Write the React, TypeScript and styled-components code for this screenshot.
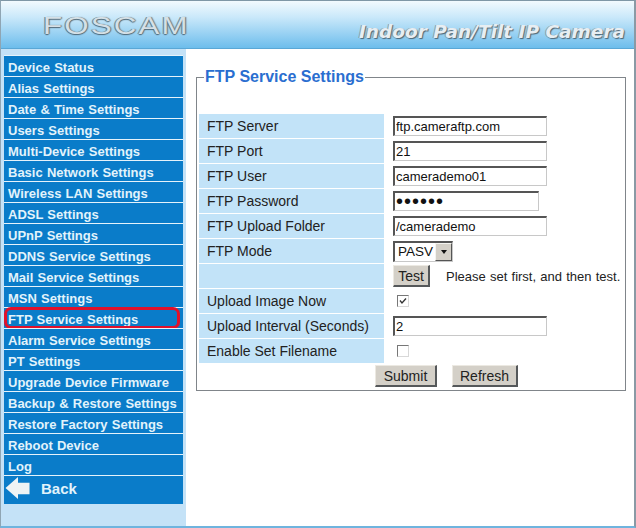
import React from 'react';
import styled, { createGlobalStyle } from 'styled-components';

const GlobalStyle = createGlobalStyle`
	html, body {
		margin: 0;
		padding: 0;
		background: #fff;
	}
	body {
		font-family: 'Liberation Sans', Arial, sans-serif;
	}
`;

const Page = styled.div`
	width: 636px;
	height: 528px;
	box-sizing: border-box;
	display: flex;
	flex-direction: column;
	overflow: hidden;
	border-top: 1px solid #7f97a6;
	border-left: 1px solid #8fa5b3;
	border-right: 2px solid #8a9aa5;
	border-bottom: 2px solid #6fb4de;
	background: #fff;
`;

const Header = styled.header`
	height: 47px;
	flex: none;
	display: flex;
	justify-content: space-between;
	background: linear-gradient(#f2fafe 0%, #c9e8fa 35%, #6dbdec 100%);
	border-bottom: 1px solid #5aa7d6;
`;

const Logo = styled.div`
	margin: 11px 0 0 42px;
	font-size: 24px;
	line-height: 28px;
	letter-spacing: 1.7px;
	color: #d5e0e6;
	text-shadow: 0 1px 1px #4f6675, 1px 0 1px #6d808d, -1px 0 0 #7c92a1;
	transform: scaleX(1.3);
	transform-origin: left center;
`;

const Slogan = styled.div`
	margin: 20px 9px 0 0;
	font-family: 'DejaVu Sans', sans-serif;
	font-size: 18.5px;
	line-height: 22px;
	font-weight: bold;
	font-style: italic;
	color: #e7eef2;
	white-space: nowrap;
	text-shadow: 1px 1px 1px #4d6575, -1px 0 0 #8aa0ae;
`;

const Body = styled.div`
	flex: 1;
	display: flex;
	min-height: 0;
`;

const Sidebar = styled.aside`
	width: 185px;
	flex: none;
	box-sizing: border-box;
	padding: 6px 3px 0 3px;
	background: #c4e2f7;
`;

const Menu = styled.ul`
	list-style: none;
	margin: 0;
	padding: 0;
	background: #0a7cc9;
`;

const MenuItem = styled.li<{ $active?: boolean }>`
	position: relative;
	height: 21px;
	box-sizing: border-box;
	padding: 3px 0 0 4px;
	border-top: 1px solid #e6f3fb;
	font-size: 13px;
	line-height: 17px;
	font-weight: bold;
	color: #e2f3fb;
	word-spacing: 0.6px;
	white-space: nowrap;

	${({ $active }) =>
		$active &&
		`&::after {
			content: '';
			position: absolute;
			left: 0;
			right: 3px;
			top: -1px;
			height: 22px;
			border: 3px solid #e0112b;
			border-radius: 7px;
			box-sizing: border-box;
		}`}
`;

const BackItem = styled.li`
	height: 29px;
	box-sizing: border-box;
	padding-bottom: 4px;
	border-top: 1px solid #e6f3fb;
	display: flex;
	align-items: center;
	gap: 10px;
	font-size: 15px;
	font-weight: bold;
	color: #e2f3fb;
	background: #0a7cc9;
`;

const Arrow = styled.svg`
	width: 26px;
	height: 24px;
	margin-left: 1px;
	flex: none;
`;

const Main = styled.main`
	flex: 1;
	padding: 19px 8px 0 10px;
	background: #fff;
`;

const Fieldset = styled.fieldset`
	margin: 0;
	padding: 28px 2px 0 2px;
	height: 323px;
	box-sizing: border-box;
	border: 1px solid #80858a;
	border-radius: 0;
`;

const Legend = styled.legend`
	margin-left: 5px;
	padding: 0 1px;
	font-size: 16px;
	line-height: 18px;
	font-weight: bold;
	color: #2a6ed0;
`;

const Rows = styled.div`
	display: flex;
	flex-direction: column;
`;

const Row = styled.div`
	height: 25px;
	display: flex;
`;

const Label = styled.div`
	width: 185px;
	flex: none;
	box-sizing: border-box;
	height: 24px;
	padding: 0 8px;
	background: #c2e3f8;
	font-size: 14px;
	line-height: 24px;
	color: #222;
	white-space: nowrap;
`;

const Cell = styled.div`
	flex: 1;
	display: flex;
	align-items: center;
	height: 24px;
	padding-left: 9px;
`;

const TextInput = styled.input<{ $width?: number }>`
	width: ${({ $width }) => $width ?? 154}px;
	height: 20px;
	box-sizing: border-box;
	margin: 0;
	padding: 0 1px;
	border-style: solid;
	border-width: 2px 1px 1px 2px;
	border-color: #555 #c8c8c8 #c8c8c8 #555;
	background: #fff;
	font-family: 'Liberation Sans', Arial, sans-serif;
	font-size: 13px;
	color: #111;
	outline: none;

	&[type='password'] {
		font-size: 20px;
		letter-spacing: 1px;
	}
`;

const SelectBox = styled.div`
	width: 60px;
	height: 21px;
	box-sizing: border-box;
	display: flex;
	align-items: stretch;
	justify-content: space-between;
	border-style: solid;
	border-width: 2px 1px 1px 2px;
	border-color: #555 #c8c8c8 #c8c8c8 #555;
	padding-left: 3px;
	font-size: 13.5px;
	line-height: 18px;
	color: #111;
`;

const SelectArrow = styled.span`
	width: 15px;
	display: flex;
	align-items: center;
	justify-content: center;
	background: #d4d0c8;
	border-style: solid;
	border-width: 1px;
	border-color: #f4f4f0 #555 #555 #f4f4f0;

	&::after {
		content: '';
		border-style: solid;
		border-width: 4px 3.5px 0;
		border-color: #111 transparent transparent;
	}
`;

const Button = styled.button`
	height: 22px;
	box-sizing: border-box;
	margin: 0;
	padding: 0;
	background: #d4d0c8;
	border-style: solid;
	border-width: 1px 2px 2px 1px;
	border-color: #ece9e2 #55585a #55585a #ece9e2;
	font-family: 'Liberation Sans', Arial, sans-serif;
	font-size: 14px;
	color: #222;
`;

const TestButton = styled(Button)`
	width: 37px;
`;

const Hint = styled.span`
	margin-left: 16px;
	font-size: 13px;
	word-spacing: 0.6px;
	color: #222;
	white-space: nowrap;
`;

const Check = styled.span`
	width: 12px;
	height: 12px;
	margin-left: 4px;
	box-sizing: border-box;
	display: block;
	background: #fff;
	border-style: solid;
	border-width: 1px;
	border-color: #777 #d8d8d8 #d8d8d8 #777;
`;

const CheckMark = styled.svg`
	display: block;
	width: 10px;
	height: 10px;
`;

const Actions = styled.div`
	display: flex;
	gap: 15px;
	margin-top: 1px;
	padding-left: 176px;
`;

const SubmitButton = styled(Button)`
	width: 62px;
`;

const RefreshButton = styled(Button)`
	width: 66px;
`;

const menuItems = [
	'Device Status',
	'Alias Settings',
	'Date & Time Settings',
	'Users Settings',
	'Multi-Device Settings',
	'Basic Network Settings',
	'Wireless LAN Settings',
	'ADSL Settings',
	'UPnP Settings',
	'DDNS Service Settings',
	'Mail Service Settings',
	'MSN Settings',
	'FTP Service Settings',
	'Alarm Service Settings',
	'PT Settings',
	'Upgrade Device Firmware',
	'Backup & Restore Settings',
	'Restore Factory Settings',
	'Reboot Device',
	'Log',
];

export default function App() {
	return (
		<>
			<GlobalStyle />
			<Page>
				<Header>
					<Logo>FOSCAM</Logo>
					<Slogan>Indoor Pan/Tilt IP Camera</Slogan>
				</Header>
				<Body>
					<Sidebar>
						<Menu>
							{menuItems.map((item) => (
								<MenuItem key={item} $active={item === 'FTP Service Settings'}>
									{item}
								</MenuItem>
							))}
							<BackItem>
								<Arrow viewBox='0 0 26 25'>
									<path d='M0 12.5 L13 1 V7 H25 V19 H13 V24 Z' fill='#eef3f4' />
								</Arrow>
								Back
							</BackItem>
						</Menu>
					</Sidebar>
					<Main>
						<Fieldset>
							<Legend>FTP Service Settings</Legend>
							<Rows>
								<Row>
									<Label>FTP Server</Label>
									<Cell>
										<TextInput defaultValue='ftp.cameraftp.com' />
									</Cell>
								</Row>
								<Row>
									<Label>FTP Port</Label>
									<Cell>
										<TextInput defaultValue='21' />
									</Cell>
								</Row>
								<Row>
									<Label>FTP User</Label>
									<Cell>
										<TextInput defaultValue='camerademo01' />
									</Cell>
								</Row>
								<Row>
									<Label>FTP Password</Label>
									<Cell>
										<TextInput type='password' defaultValue='123456' $width={146} />
									</Cell>
								</Row>
								<Row>
									<Label>FTP Upload Folder</Label>
									<Cell>
										<TextInput defaultValue='/camerademo' />
									</Cell>
								</Row>
								<Row>
									<Label>FTP Mode</Label>
									<Cell>
										<SelectBox>
											PASV
											<SelectArrow />
										</SelectBox>
									</Cell>
								</Row>
								<Row>
									<Label />
									<Cell>
										<TestButton>Test</TestButton>
										<Hint>Please set first, and then test.</Hint>
									</Cell>
								</Row>
								<Row>
									<Label>Upload Image Now</Label>
									<Cell>
										<Check>
											<CheckMark viewBox='0 0 10 10'>
												<path d='M2 4.5 L4 7 L8 2.5' fill='none' stroke='#333' strokeWidth='1.3' />
											</CheckMark>
										</Check>
									</Cell>
								</Row>
								<Row>
									<Label>Upload Interval (Seconds)</Label>
									<Cell>
										<TextInput defaultValue='2' />
									</Cell>
								</Row>
								<Row>
									<Label>Enable Set Filename</Label>
									<Cell>
										<Check />
									</Cell>
								</Row>
							</Rows>
							<Actions>
								<SubmitButton>Submit</SubmitButton>
								<RefreshButton>Refresh</RefreshButton>
							</Actions>
						</Fieldset>
					</Main>
				</Body>
			</Page>
		</>
	);
}
